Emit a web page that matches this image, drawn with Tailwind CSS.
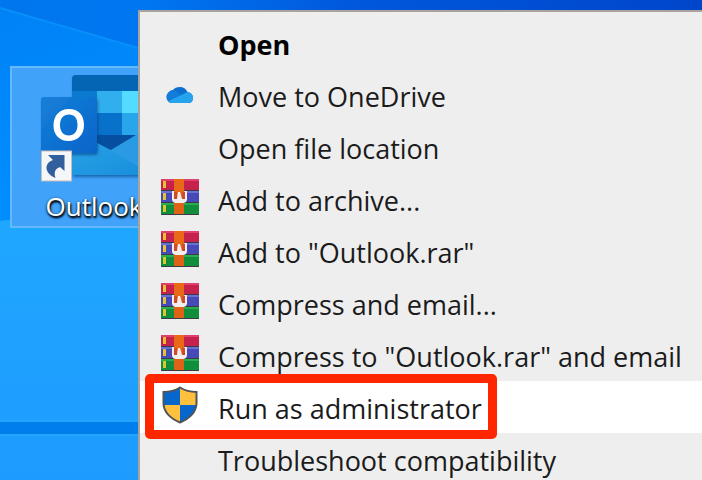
<!DOCTYPE html>
<html lang="en">
<head>
<meta charset="utf-8">
<meta name="viewport" content="width=device-width, initial-scale=1">
<title>Desktop</title>
<script src="https://cdn.jsdelivr.net/npm/@tailwindcss/browser@4"></script>
</head>
<body class="relative h-screen overflow-hidden bg-[#1e9fff] font-['Open_Sans','Noto_Sans',sans-serif]">

<!-- Wallpaper -->
<svg class="absolute inset-0 h-full w-full" viewBox="0 0 702 480" preserveAspectRatio="none" aria-hidden="true">
  <defs>
    <linearGradient id="sky" x1="0" x2="1" y1="0" y2="0"><stop offset="0" stop-color="#0076ee"/><stop offset=".2" stop-color="#0077f0"/><stop offset=".5" stop-color="#0058dc"/><stop offset="1" stop-color="#0046cb"/></linearGradient>
    <linearGradient id="beam" x1="0" x2=".2" y1="0" y2="1"><stop offset="0" stop-color="#0082f6"/><stop offset="1" stop-color="#0090ff"/></linearGradient>
    <linearGradient id="pane" x1="0" x2="0" y1="0" y2="1"><stop offset="0" stop-color="#1fa8ff"/><stop offset="1" stop-color="#1e9bff"/></linearGradient>
  </defs>
  <rect width="702" height="480" fill="url(#sky)"/>
  <path d="M0 8 L138 48 V240 H0Z" fill="url(#beam)"/>
  <path d="M0 8 L138 48" stroke="#078ffa" stroke-width="2"/>
  <path d="M0 221 L138 204 V480 H0Z" fill="url(#pane)"/>
  <path d="M0 421H138" stroke="#28aaff"/>
  <rect y="422" width="138" height="12" fill="#007fec"/>
  <path d="M0 435H138" stroke="#2badff"/>
</svg>

<!-- Desktop shortcut -->
<a href="#outlook" class="absolute top-[66px] left-[10px] flex w-[168px] flex-col items-center border-2 border-[#64b8fc] bg-[#41a2fa]">
  <svg class="mt-[6px] h-[108px] w-[108px]" viewBox="40 74 108 108" aria-hidden="true">
    <defs>
      <linearGradient id="tile" x1="0" x2="1" y1="0" y2="1"><stop offset="0" stop-color="#1680d8"/><stop offset="1" stop-color="#0664ca"/></linearGradient>
      <linearGradient id="flap" x1="0" x2="1" y1="0" y2="1"><stop offset="0" stop-color="#2ba3e8"/><stop offset="1" stop-color="#168edb"/></linearGradient>
      <filter id="soft" x="-20%" y="-20%" width="150%" height="150%"><feDropShadow dx="1" dy="2" stdDeviation="1.5" flood-color="#033b7c" flood-opacity=".6"/></filter>
    </defs>
    <g filter="url(#soft)">
      <path d="M72 79 Q72 75 76 75 H148 V175 H72Z" fill="#1e94df"/>
    </g>
    <path d="M72 79 Q72 75 76 75 H148 V91 H72Z" fill="#0365b4"/>
    <path d="M72 91H97V113H72Z" fill="#0b7bd0"/>
    <path d="M97 91H122V113H97Z" fill="#30aeed"/>
    <path d="M122 91H148V113H122Z" fill="#53dcff"/>
    <path d="M90 113H122V135H90Z" fill="#0872ca"/>
    <path d="M122 113H148V135H122Z" fill="#29a6eb"/>
    <path d="M97 135H136L111 150L97 143Z" fill="#064e9f"/>
    <path d="M108 152 L138 134 L148 129 V175 H90Z" fill="#2a9ae4"/>
    <path d="M72 135 L97 143 L148 172 V175 H72Z" fill="url(#flap)"/>
    <rect x="41" y="97" width="56" height="56" rx="3" fill="url(#tile)" filter="url(#soft)"/>
    <path fill-rule="evenodd" d="M69 109C59 109 53.500 116 53.500 125.500C53.500 135 59.500 141 68.500 141C78 141 84 134.500 84 125C84 115 78.500 109 69 109ZM69 114.500C74.500 114.500 77.500 118.500 77.500 125C77.500 131.500 74 135.500 68.700 135.500C63.500 135.500 60 131.500 60 125C60 118.500 63.500 114.500 69 114.500Z" fill="#fff"/>
    <rect x="41.500" y="151" width="30" height="30" fill="#f5f6f8" stroke="#c6bdb9"/>
    <path d="M48 155H64.500V171L60 167C55.500 168.500 53.500 172 55.500 178C44 173 44 163 53 160Z" fill="#315e9d"/>
  </svg>
  <span class="mt-[8px] mb-1 text-[26px] leading-[32px] text-white [text-shadow:1px_2px_2px_#000,0_1px_3px_#000]">Outlook</span>
</a>

<!-- Shared menu artwork -->
<svg class="hidden" aria-hidden="true">
  <symbol id="rar" viewBox="0 0 40 36">
    <rect x="1" y="0" width="38" height="36" fill="#3d3a48"/>
    <rect x="1" y="0" width="38" height="11" fill="#c6214d"/><path d="M1 0H39V2H1Z" fill="#df416b"/>
    <rect x="1" y="12" width="38" height="11" fill="#4749b8"/><path d="M1 12H39V14H1Z" fill="#6870d2"/>
    <rect x="1" y="24" width="38" height="11" fill="#118e3b"/><path d="M1 24H39V26H1Z" fill="#27ae50"/>
    <path d="M3 2H6V9H3ZM3 14H6V21H3ZM3 26H6V33H3Z" fill="#e4c42e"/>
    <rect x="14" y="23" width="10" height="12" fill="#df6317"/>
    <path d="M12 12H27V21Q26 24 23 24H16Q13 24 12 21Z" fill="#f4efec"/>
    <path d="M14 0H24V9L25 20H22L20 13H18L17 20H14V9Z" fill="#e86a18"/>
    <path d="M14 13H17V20H14ZM22 13H25V20H22Z" fill="#d24a2c"/>
  </symbol>
</svg>

<!-- Context menu -->
<ul role="menu" aria-label="Outlook shortcut" class="absolute top-[10px] right-0 left-[138px] border-t-2 border-l-2 border-[#a9a39f] bg-[#eeeeee] pt-[5px] text-[27px] leading-[52px] whitespace-nowrap text-[#1b1b1b]">
  <li role="none"><button role="menuitem" class="flex h-[52px] w-full items-center pl-[20px] text-left font-bold text-black"><span class="w-[58px]"></span><span class="pt-1">Open</span></button></li>
  <li role="none"><button role="menuitem" class="flex h-[52px] w-full items-center pl-[20px] text-left"><span class="w-[58px]">
    <svg class="ml-[6px] h-[18px] w-[28px]" viewBox="0 0 28 18" aria-hidden="true">
      <path d="M6 17A6 6 0 0 1 2 7Q4 4 7 4Q9 1 14 1Q19 1 21.500 6Q27 7 27 12Q27 17 22 17Z" fill="#0a6fcf"/>
      <path d="M2 15L15 9L21.500 6Q27 7 27 12Q27 17 22 17H6Q3 17 2 15Z" fill="#25a3ec"/>
      <path d="M2 7Q5 3 10 5L15 9L2 15Q0 11 2 7Z" fill="#127cd8"/>
    </svg></span><span class="pt-1">Move to OneDrive</span></button></li>
  <li role="none"><button role="menuitem" class="flex h-[52px] w-full items-center pl-[20px] text-left"><span class="w-[58px]"></span><span class="pt-1">Open file location</span></button></li>
  <li role="none"><button role="menuitem" class="flex h-[52px] w-full items-center pl-[20px] text-left"><span class="w-[58px] pb-1"><svg class="h-[36px] w-[40px]" aria-hidden="true"><use href="#rar"/></svg></span><span class="pt-1">Add to archive...</span></button></li>
  <li role="none"><button role="menuitem" class="flex h-[52px] w-full items-center pl-[20px] text-left"><span class="w-[58px] pb-1"><svg class="h-[36px] w-[40px]" aria-hidden="true"><use href="#rar"/></svg></span><span class="pt-1">Add to "Outlook.rar"</span></button></li>
  <li role="none"><button role="menuitem" class="flex h-[52px] w-full items-center pl-[20px] text-left"><span class="w-[58px] pb-1"><svg class="h-[36px] w-[40px]" aria-hidden="true"><use href="#rar"/></svg></span><span class="pt-1">Compress and email...</span></button></li>
  <li role="none"><button role="menuitem" class="flex h-[52px] w-full items-center pl-[20px] text-left"><span class="w-[58px] pb-1"><svg class="h-[36px] w-[40px]" aria-hidden="true"><use href="#rar"/></svg></span><span class="pt-1">Compress to "Outlook.rar" and email</span></button></li>
  <li role="none" class="relative"><button role="menuitem" class="flex h-[52px] w-full items-center bg-white pl-[20px] text-left"><span class="w-[58px] pb-1">
    <svg class="ml-[2px] h-[38px] w-[36px]" viewBox="0 0 36 38" aria-hidden="true">
      <clipPath id="shield"><path d="M18 1Q25 6 35 6V18Q34 30 18 37Q2 30 1 18V6Q11 6 18 1Z"/></clipPath>
      <g clip-path="url(#shield)"><path d="M0 0H18V19H0ZM18 19H36V38H18Z" fill="#0766cc"/><path d="M18 0H36V19H18ZM0 19H18V38H0Z" fill="#ffc13d"/></g>
      <path d="M18 1.500Q25 6 34.500 6V18Q33.500 30 18 36.500Q2.500 30 1.500 18V6Q11 6 18 1.500Z" fill="none" stroke="#515457" stroke-width="2"/>
    </svg></span><span class="pt-1">Run as administrator</span></button>
    <span class="pointer-events-none absolute -top-[7px] left-[5px] h-[65px] w-[352px] rounded-[5px] border-[9px] border-[#ff2600]"></span>
  </li>
  <li role="none"><button role="menuitem" class="flex h-[52px] w-full items-center pl-[20px] text-left"><span class="w-[58px]"></span><span class="pt-1">Troubleshoot compatibility</span></button></li>
</ul>
</body>
</html>
